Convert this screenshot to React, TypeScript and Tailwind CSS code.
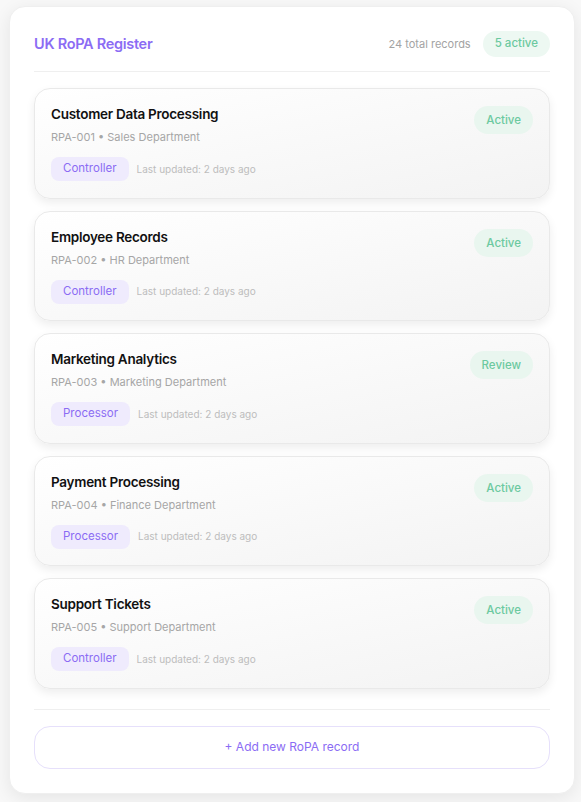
const records = [
  { name: "Customer Data Processing", id: "RPA-001", dept: "Sales Department", role: "Controller", status: "Active" },
  { name: "Employee Records", id: "RPA-002", dept: "HR Department", role: "Controller", status: "Active" },
  { name: "Marketing Analytics", id: "RPA-003", dept: "Marketing Department", role: "Processor", status: "Review" },
  { name: "Payment Processing", id: "RPA-004", dept: "Finance Department", role: "Processor", status: "Active" },
  { name: "Support Tickets", id: "RPA-005", dept: "Support Department", role: "Controller", status: "Active" },
];

export default function App() {
  return (
    <div className="min-h-screen bg-[#f8f8f8] pl-[9px] pt-[6px] pb-2 font-['Inter',sans-serif]">
      <div className="w-[566px] rounded-2xl border border-[#efefef] bg-white px-6 pt-[23px] pb-6 shadow-[0_4px_18px_rgba(0,0,0,0.08)]">
        <div className="flex h-7 items-center justify-between">
          <h1 className="text-[14.5px] font-semibold tracking-[-0.02em] text-[#8b6cf4]">UK RoPA Register</h1>
          <div className="flex items-center gap-3">
            <span className="text-[11px] text-[#a3a3a3]">24 total records</span>
            <span className="rounded-full bg-[#edf8f2] px-3 py-1 text-[11.5px] font-medium text-[#6cc9a0]">5 active</span>
          </div>
        </div>
        <div className="mt-[13px] h-px bg-[#efefef]" />

        <div className="mt-4 flex flex-col gap-3">
          {records.map((r) => (
            <RecordCard key={r.id} {...r} />
          ))}
        </div>

        <div className="mt-5 h-px bg-[#efefef]" />
        <button className="mt-4 flex h-[43px] w-full items-center justify-center rounded-2xl border border-[#e6e0fb] bg-white text-[12px] text-[#8b6cf4]">
          + Add new RoPA record
        </button>
      </div>
    </div>
  );
}

function RecordCard({
  name,
  id,
  dept,
  role,
  status,
}: {
  name: string;
  id: string;
  dept: string;
  role: string;
  status: string;
}) {
  return (
    <div className="flex items-start justify-between rounded-2xl border border-[#e9e9e9] bg-gradient-to-br from-white to-[#f3f3f3] px-4 pt-[15px] pb-[16.5px] shadow-[0_4px_10px_rgba(0,0,0,0.07)]">
      <div>
        <div className="text-[13.5px] leading-5 font-semibold tracking-[-0.02em] text-[#111111]">{name}</div>
        <div className="mt-[5px] text-[11px] leading-4 text-[#a6a6a6]">
          {id} • {dept}
        </div>
        <div className="mt-3 flex items-center gap-2">
          <span className="flex h-6 items-center rounded-lg bg-[#efebfd] px-3 text-[11.5px] text-[#8b6cf4]">{role}</span>
          <span className="text-[10px] text-[#bdbdbd]">Last updated: 2 days ago</span>
        </div>
      </div>
      <span className="mt-[2px] rounded-full bg-[#e9f6ef] px-3 py-1.5 text-[11.5px] leading-4 font-medium text-[#6cc9a0]">{status}</span>
    </div>
  );
}
